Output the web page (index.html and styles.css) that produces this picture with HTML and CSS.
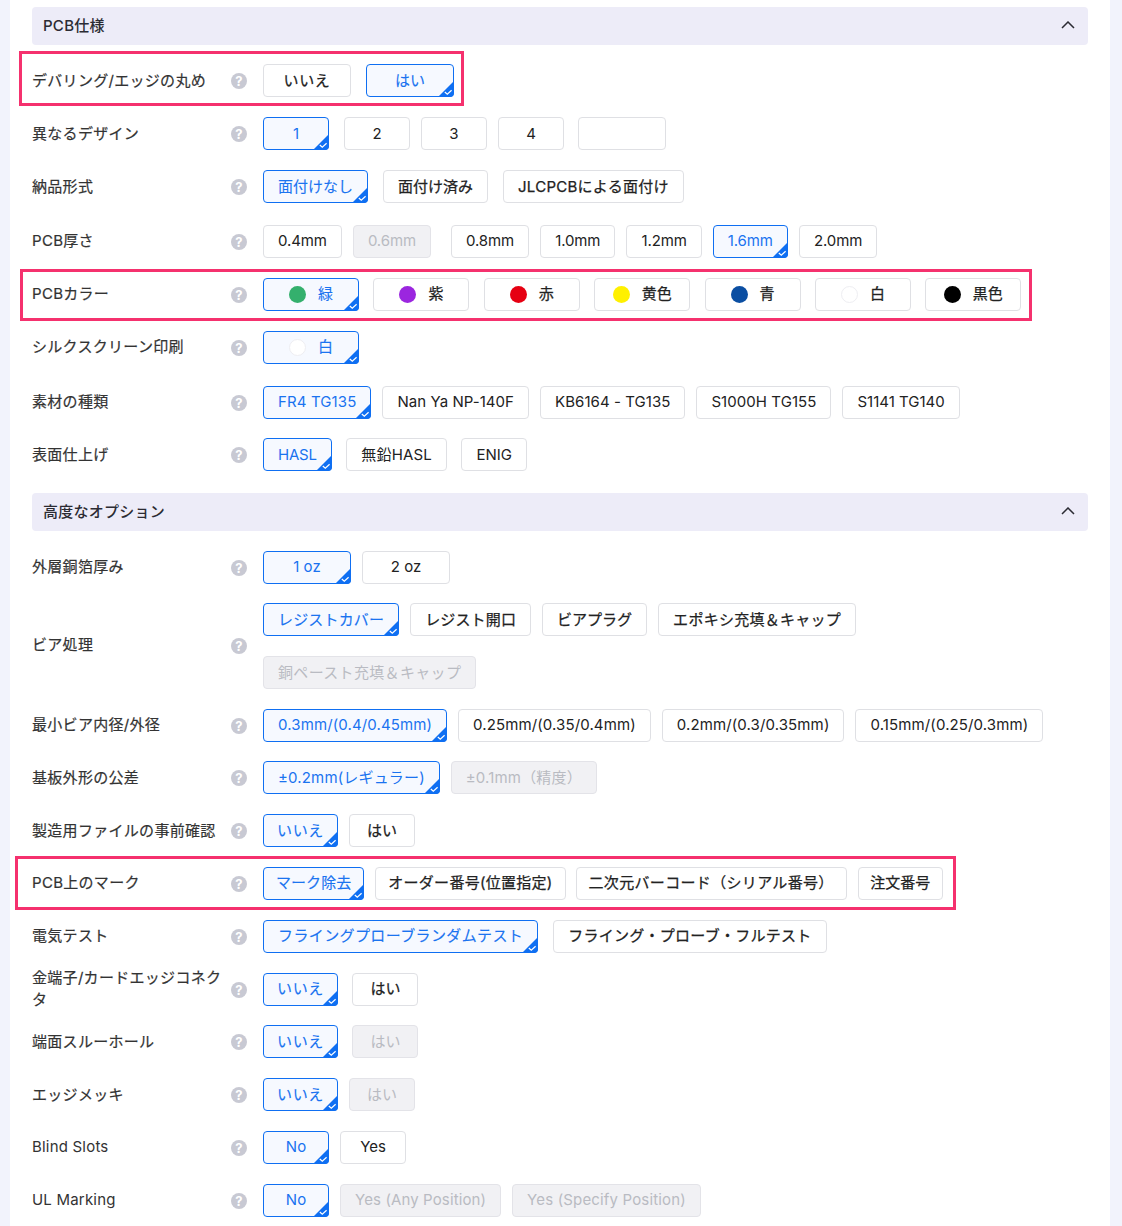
FILE: index.html
```html
<!DOCTYPE html>
<html lang="ja">
<head>
<meta charset="utf-8">
<title>PCB仕様</title>
<link rel="stylesheet" href="styles.css">
</head>
<body>
<svg class="defs" width="0" height="0" aria-hidden="true">
  <symbol id="corner" viewBox="0 0 16 16">
    <path d="M16 0V12a4 4 0 0 1-4 4H0Z" fill="#0f6ff2"/>
    <path d="M6.8 11l2.5 2.2 4.3-3.9" fill="none" stroke="#fff" stroke-width="1.2"/>
  </symbol>
  <symbol id="chev" viewBox="0 0 14 8">
    <path d="M1 7L7 1l6 6" fill="none" stroke="#2b2b33" stroke-width="1.5"/>
  </symbol>
</svg>
<main class="panel">
  <div class="sec"><span>PCB仕様</span><svg class="chev"><use href="#chev"/></svg></div>

  <div class="row short">
    <div class="mark m1"></div>
    <div class="lab">デバリング/エッジの丸め</div><i class="hlp">?</i>
    <div class="opts g15">
      <button class="b ja w88 l6">いいえ</button>
      <button class="b ja w88 on">はい<svg class="cor"><use href="#corner"/></svg></button>
    </div>
  </div>
  <div class="row">
    <div class="lab">異なるデザイン</div><i class="hlp">?</i>
    <div class="opts g11">
      <button class="b w66 on gap15">1<svg class="cor"><use href="#corner"/></svg></button>
      <button class="b w66">2</button>
      <button class="b w66">3</button>
      <button class="b w66 gap14">4</button>
      <button class="b w88"></button>
    </div>
  </div>
  <div class="row">
    <div class="lab">納品形式</div><i class="hlp">?</i>
    <div class="opts g15">
      <button class="b ja on">面付けなし<svg class="cor"><use href="#corner"/></svg></button>
      <button class="b ja">面付け済み</button>
      <button class="b ja l3">JLCPCBによる面付け</button>
    </div>
  </div>
  <div class="row tall up">
    <div class="lab">PCB厚さ</div><i class="hlp">?</i>
    <div class="opts g11">
      <button class="b ln">0.4mm</button>
      <button class="b off ln gap20">0.6mm</button>
      <button class="b ln">0.8mm</button>
      <button class="b ln">1.0mm</button>
      <button class="b ln">1.2mm</button>
      <button class="b on ln">1.6mm<svg class="cor"><use href="#corner"/></svg></button>
      <button class="b ln">2.0mm</button>
    </div>
  </div>
  <div class="row up">
    <div class="mark m2"></div>
    <div class="lab">PCBカラー</div><i class="hlp">?</i>
    <div class="opts g14">
      <button class="b ja w96 on"><i class="dot green"></i>緑<svg class="cor"><use href="#corner"/></svg></button>
      <button class="b ja w96"><i class="dot purple"></i>紫</button>
      <button class="b ja w96"><i class="dot red"></i>赤</button>
      <button class="b ja w96"><i class="dot yellow"></i>黄色</button>
      <button class="b ja w96"><i class="dot blue"></i>青</button>
      <button class="b ja w96"><i class="dot white"></i>白</button>
      <button class="b ja w96"><i class="dot black"></i>黒色</button>
    </div>
  </div>
  <div class="row up">
    <div class="lab">シルクスクリーン印刷</div><i class="hlp">?</i>
    <div class="opts">
      <button class="b ja w96 on"><i class="dot white"></i>白<svg class="cor"><use href="#corner"/></svg></button>
    </div>
  </div>
  <div class="row tall up">
    <div class="lab">素材の種類</div><i class="hlp">?</i>
    <div class="opts g11">
      <button class="b on l1">FR4 TG135<svg class="cor"><use href="#corner"/></svg></button>
      <button class="b l0">Nan Ya NP-140F</button>
      <button class="b l0">KB6164 - TG135</button>
      <button class="b l0">S1000H TG155</button>
      <button class="b">S1141 TG140</button>
    </div>
  </div>
  <div class="row short r-last">
    <div class="lab">表面仕上げ</div><i class="hlp">?</i>
    <div class="opts g14h">
      <button class="b on ln2">HASL<svg class="cor"><use href="#corner"/></svg></button>
      <button class="b l2">無鉛HASL</button>
      <button class="b">ENIG</button>
    </div>
  </div>

  <div class="sec"><span>高度なオプション</span><svg class="chev"><use href="#chev"/></svg></div>

  <div class="row up">
    <div class="lab">外層銅箔厚み</div><i class="hlp">?</i>
    <div class="opts g11">
      <button class="b w88 on">1 oz<svg class="cor"><use href="#corner"/></svg></button>
      <button class="b w88">2 oz</button>
    </div>
  </div>
  <div class="row short via">
    <div class="lab">ビア処理</div><i class="hlp">?</i>
    <div class="opts g11 wrap">
      <button class="b ja on l2">レジストカバー<svg class="cor"><use href="#corner"/></svg></button>
      <button class="b ja l2">レジスト開口</button>
      <button class="b ja">ビアプラグ</button>
      <button class="b ja l3">エポキシ充填＆キャップ</button>
      <button class="b off ja l4">銅ペースト充填＆キャップ</button>
    </div>
  </div>
  <div class="row up">
    <div class="lab">最小ビア内径/外径</div><i class="hlp">?</i>
    <div class="opts g11">
      <button class="b on l1">0.3mm/(0.4/0.45mm)<svg class="cor"><use href="#corner"/></svg></button>
      <button class="b l1">0.25mm/(0.35/0.4mm)</button>
      <button class="b l1">0.2mm/(0.3/0.35mm)</button>
      <button class="b l1">0.15mm/(0.25/0.3mm)</button>
    </div>
  </div>
  <div class="row short">
    <div class="lab">基板外形の公差</div><i class="hlp">?</i>
    <div class="opts g11">
      <button class="b on l2">±0.2mm(レギュラー)<svg class="cor"><use href="#corner"/></svg></button>
      <button class="b off l2">±0.1mm（精度）</button>
    </div>
  </div>
  <div class="row">
    <div class="lab">製造用ファイルの事前確認</div><i class="hlp">?</i>
    <div class="opts g11">
      <button class="b ja on w75 l6">いいえ<svg class="cor"><use href="#corner"/></svg></button>
      <button class="b ja w66">はい</button>
    </div>
  </div>
  <div class="row up">
    <div class="mark m3"></div>
    <div class="lab">PCB上のマーク</div><i class="hlp">?</i>
    <div class="opts g11">
      <button class="b ja p12 on l0">マーク除去<svg class="cor"><use href="#corner"/></svg></button>
      <button class="b p12 ja l3 gap10">オーダー番号(位置指定)</button>
      <button class="b p12 ja l4">二次元バーコード（シリアル番号）</button>
      <button class="b p12 ja w85">注文番号</button>
    </div>
  </div>
  <div class="row up">
    <div class="lab">電気テスト</div><i class="hlp">?</i>
    <div class="opts g15">
      <button class="b ja on l5">フライングプローブランダムテスト<svg class="cor"><use href="#corner"/></svg></button>
      <button class="b ja l3">フライング・プローブ・フルテスト</button>
    </div>
  </div>
  <div class="row up">
    <div class="lab">金端子/カードエッジコネクタ</div><i class="hlp">?</i>
    <div class="opts g14">
      <button class="b ja on w75 l6">いいえ<svg class="cor"><use href="#corner"/></svg></button>
      <button class="b ja w66">はい</button>
    </div>
  </div>
  <div class="row short">
    <div class="lab">端面スルーホール</div><i class="hlp">?</i>
    <div class="opts g14">
      <button class="b ja on w75 l6">いいえ<svg class="cor"><use href="#corner"/></svg></button>
      <button class="b off w66">はい</button>
    </div>
  </div>
  <div class="row">
    <div class="lab">エッジメッキ</div><i class="hlp">?</i>
    <div class="opts g11">
      <button class="b ja on w75 l6">いいえ<svg class="cor"><use href="#corner"/></svg></button>
      <button class="b off w66">はい</button>
    </div>
  </div>
  <div class="row up">
    <div class="lab lat">Blind Slots</div><i class="hlp">?</i>
    <div class="opts g11">
      <button class="b w66 on">No<svg class="cor"><use href="#corner"/></svg></button>
      <button class="b w66">Yes</button>
    </div>
  </div>
  <div class="row up">
    <div class="lab lat">UL Marking</div><i class="hlp">?</i>
    <div class="opts g11">
      <button class="b w66 on">No<svg class="cor"><use href="#corner"/></svg></button>
      <button class="b off l1">Yes (Any Position)</button>
      <button class="b off l2">Yes (Specify Position)</button>
    </div>
  </div>
</main>
</body>
</html>
```
FILE: styles.css
```css
* { box-sizing: border-box; }
html, body { margin: 0; padding: 0; }
body {
  background: #f2f3fc;
  font-family: Inter, "Noto Sans CJK JP", "Noto Sans", sans-serif;
  font-size: 15px;
  line-height: 22px;
  color: #333;
  height: 1226px;
  overflow: hidden;
}
.defs { position: absolute; }
.panel {
  margin: 0 12px 0 10px;
  height: 1226px;
  background: #fff;
  padding: 7px 22px 0;
}
.sec {
  height: 38px;
  background: #edecf8;
  border-radius: 4px;
  display: flex;
  align-items: center;
  justify-content: space-between;
  padding: 0 13px 0 11px;
  font-weight: 500;
  letter-spacing: 0.25px;
  color: #2b2b33;
}
.chev { width: 14px; height: 8px; margin-bottom: 3px; }
.row {
  position: relative;
  display: flex;
  align-items: center;
  margin-top: 20px;
}
.tall { margin-top: 22px; }
.short { margin-top: 19px; }
.r-last { margin-bottom: 22px; }
.lab {
  width: 199px;
  margin: -6px 0;
  padding-right: 8px;
  letter-spacing: 0.3px;
  color: #333;
  -webkit-text-stroke: 0.2px #333;
  flex: none;
}
.up .lab, .via .lab { margin: -7px 0 -5px; }
.up .lab.lat { letter-spacing: 0.2px; -webkit-text-stroke: 0; }
.hlp {
  flex: none;
  width: 16px;
  height: 16px;
  margin-right: 16px;
  border-radius: 50%;
  background: #c8c9d3;
  color: #fff;
  font-style: normal;
  font-weight: 700;
  font-size: 13px;
  line-height: 16px;
  text-align: center;
}
.opts { display: flex; width: 800px; }
.wrap { flex-wrap: wrap; row-gap: 20px; }
.g11 { column-gap: 11px; }
.g14 { column-gap: 14.4px; }
.g14h { column-gap: 14.5px; }
.g15 { column-gap: 15px; }
.gap15 { margin-right: 4px; }
.gap14 { margin-right: 3px; }
.gap20 { margin-right: 9px; }
.gap10 { margin-right: -1px; }
.ln { letter-spacing: -0.1px; }
.ln2 { letter-spacing: -0.2px; }
.l0 { letter-spacing: 0.06px; }
.l1 { letter-spacing: 0.12px; }
.l2 { letter-spacing: 0.16px; }
.l3 { letter-spacing: 0.27px; }
.l4 { letter-spacing: 0.33px; }
.l5 { letter-spacing: 0.38px; }
.l6 { letter-spacing: 0.6px; }
.b {
  position: relative;
  flex: none;
  height: 33px;
  padding: 0 14px;
  background: #fff;
  border: 1px solid #dfe0e4;
  border-radius: 4px;
  font: inherit;
  color: #222;
  white-space: nowrap;
  display: inline-flex;
  align-items: center;
  justify-content: center;
}
.up .b { padding-bottom: 2px; }
.up .dot { margin-top: 2px; }
.ja { -webkit-text-stroke: 0.25px currentColor; }
.w66 { width: 66px; }
.w75 { width: 75px; }
.w85 { width: 85px; padding: 0 0 2px; }
.w88 { width: 88px; }
.w96 { width: 96px; }
.p12 { padding: 0 12px; }
.b.on {
  background: #f6f9ff;
  border-color: #0f6ff2;
  color: #1a73f0;
}
.b.on.ja { -webkit-text-stroke: 0.12px currentColor; }
.b.off {
  background: #f1f1f4;
  border-color: #e3e3e8;
  color: #b9bbc2;
  -webkit-text-stroke: 0;
}
.cor {
  position: absolute;
  right: -1px;
  bottom: -1px;
  width: 16px;
  height: 16px;
}
.dot {
  width: 17px;
  height: 17px;
  border-radius: 50%;
  margin-right: 12px;
  flex: none;
}
.green { background: #34b06d; }
.purple { background: #9b26df; }
.red { background: #e60012; }
.yellow { background: #fff000; }
.blue { background: #0b4ea2; }
.white { background: #fff; border: 1px solid #eeeef2; }
.black { background: #000; }
.mark {
  position: absolute;
  border: 3px solid #f5316e;
  pointer-events: none;
}
.m1 { left: -13px; top: -13px; width: 445px; height: 55px; }
.m2 { left: -12px; top: -9px; width: 1012px; height: 52px; }
.m3 { left: -17px; top: -11px; width: 941px; height: 54px; }
```
